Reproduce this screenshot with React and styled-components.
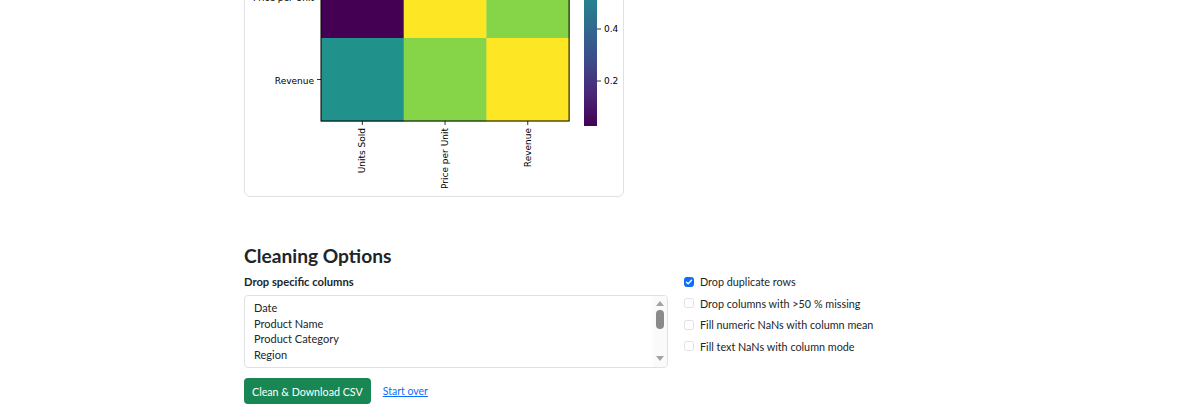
import React from "react";
import styled, { createGlobalStyle } from "styled-components";

const GlobalStyle = createGlobalStyle`
  html, body {
    margin: 0;
    padding: 0;
    background: #fff;
    overflow: hidden;
  }
  body {
    font-family: Lato, "Noto Sans", Arial, sans-serif;
    color: #212529;
  }
`;

const Page = styled.div`
  width: 696px;
  margin: -160px 0 0 244px;
`;

const ChartCard = styled.div`
  width: 370px;
  border: 1px solid #dee2e6;
  border-radius: 6px;
  padding: 4px;
  background: #fff;
`;

const Section = styled.section`
  margin-top: 47px;
`;

const Heading = styled.h4`
  margin: 0 0 6px;
  font-size: 19.2px;
  font-weight: 700;
  line-height: 24px;
  color: #212529;
`;

const Columns = styled.div`
  display: grid;
  grid-template-columns: 424px 1fr;
  column-gap: 16px;
`;

const Label = styled.div`
  font-size: 11.2px;
  font-weight: 700;
  line-height: 15px;
  margin-bottom: 6px;
`;

const ListBox = styled.div`
  display: flex;
  height: 73px;
  border: 1px solid #dee2e6;
  border-radius: 4px;
  box-sizing: border-box;
  overflow: hidden;
`;

const Options = styled.ul`
  flex: 1;
  margin: 0;
  padding: 4px 9px;
  list-style: none;
  font-size: 11px;
  line-height: 15.5px;
`;

const Scrollbar = styled.div`
  width: 14px;
  display: flex;
  flex-direction: column;
  align-items: center;
  justify-content: space-between;
  padding: 5px 0 6px;
  background: #fafafa;
`;

const Arrow = styled.div`
  width: 0;
  height: 0;
  border-left: 4px solid transparent;
  border-right: 4px solid transparent;
  ${(p) =>
    p.$down
      ? "border-top: 5px solid #a3a3a3;"
      : "border-bottom: 5px solid #a3a3a3;"}
`;

const Thumb = styled.div`
  width: 8px;
  height: 19px;
  border-radius: 4px;
  background: #8a8a8a;
  margin-bottom: auto;
  margin-top: 4px;
`;

const Actions = styled.div`
  display: flex;
  align-items: center;
  gap: 12px;
  margin-top: 10px;
`;

const Button = styled.button`
  height: 26px;
  padding: 0 8px;
  border: none;
  border-radius: 4px;
  background: #198754;
  color: #fff;
  font-family: inherit;
  font-size: 10.7px;
  cursor: pointer;
`;

const LinkText = styled.a`
  color: #0d6efd;
  font-size: 10.5px;
  text-decoration: underline;
`;

const Checks = styled.div`
  display: flex;
  flex-direction: column;
  gap: 6.5px;
  padding-top: 0;
`;

const CheckRow = styled.label`
  display: flex;
  align-items: center;
  gap: 6px;
  font-size: 10.8px;
  line-height: 15px;
`;

const Box = styled.span`
  width: 10px;
  height: 10px;
  border-radius: 2.5px;
  box-sizing: border-box;
  display: inline-flex;
  align-items: center;
  justify-content: center;
  border: 1px solid ${(p) => (p.$checked ? "#0d6efd" : "#dee2e6")};
  background: ${(p) => (p.$checked ? "#0d6efd" : "#fff")};
`;

const PURPLE = "#440154";
const TEAL = "#21918c";
const GREEN = "#86d549";
const YELLOW = "#fde725";

const names = ["Units Sold", "Price per Unit", "Revenue"];
const cells = [
  [YELLOW, PURPLE, TEAL],
  [PURPLE, YELLOW, GREEN],
  [TEAL, GREEN, YELLOW],
];

const Heatmap = () => {
  const x0 = 72;
  const y0 = 27;
  const cw = 82.7;
  const ch = 83;
  const cbTop = 28;
  const cbBottom = 281;
  const valY = (v) => 236 - (v - 0.2) * 260;
  return (
    <svg width="370" height="347" viewBox="0 0 370 347" style={{ display: "block" }}>
      <defs>
        <linearGradient id="viridis" x1="0" y1="1" x2="0" y2="0">
          <stop offset="0" stopColor="#440154" />
          <stop offset="0.13" stopColor="#482878" />
          <stop offset="0.25" stopColor="#3e4989" />
          <stop offset="0.38" stopColor="#31688e" />
          <stop offset="0.5" stopColor="#26828e" />
          <stop offset="0.62" stopColor="#1f9e89" />
          <stop offset="0.75" stopColor="#35b779" />
          <stop offset="0.87" stopColor="#6ece58" />
          <stop offset="1" stopColor="#fde725" />
        </linearGradient>
      </defs>
      {cells.map((row, r) =>
        row.map((c, k) => (
          <rect key={`${r}-${k}`} x={x0 + k * cw} y={y0 + r * ch} width={cw + 0.5} height={ch + 0.5} fill={c} />
        ))
      )}
      <rect x={x0} y={y0} width={cw * 3} height={ch * 3} fill="none" stroke="#000" strokeWidth="1" />
      <g fontFamily="DejaVu Sans, sans-serif" fontSize="9" fill="#000">
        {names.map((n, i) => (
          <g key={n}>
            <line x1={x0 - 4} x2={x0} y1={y0 + ch * (i + 0.5)} y2={y0 + ch * (i + 0.5)} stroke="#000" strokeWidth="0.8" />
            <text x={x0 - 7} y={y0 + ch * (i + 0.5) + 4} textAnchor="end">{n}</text>
            <line x1={x0 + cw * (i + 0.5)} x2={x0 + cw * (i + 0.5)} y1={y0 + ch * 3} y2={y0 + ch * 3 + 4} stroke="#000" strokeWidth="0.8" />
            <text
              transform={`translate(${x0 + cw * (i + 0.5) + 3} ${y0 + ch * 3 + 7}) rotate(-90)`}
              textAnchor="end"
            >
              {n}
            </text>
          </g>
        ))}
        <rect x="335" y={cbTop} width="13" height={cbBottom - cbTop} fill="url(#viridis)" />
        {[0.2, 0.4, 0.6, 0.8, 1.0].map((v) => (
          <g key={v}>
            <line x1="348" x2="352" y1={valY(v)} y2={valY(v)} stroke="#000" strokeWidth="0.8" />
            <text x="355" y={valY(v) + 3}>{v.toFixed(1)}</text>
          </g>
        ))}
      </g>
    </svg>
  );
};

const Check = () => (
  <svg width="8" height="8" viewBox="0 0 8 8">
    <path d="M1.5 4.2 L3.2 5.8 L6.5 2.2" fill="none" stroke="#fff" strokeWidth="1.4" strokeLinecap="round" strokeLinejoin="round" />
  </svg>
);

const options = [
  { label: "Drop duplicate rows", checked: true },
  { label: "Drop columns with >50 % missing", checked: false },
  { label: "Fill numeric NaNs with column mean", checked: false },
  { label: "Fill text NaNs with column mode", checked: false },
];

const App = () => (
  <>
    <GlobalStyle />
    <Page>
      <ChartCard>
        <Heatmap />
      </ChartCard>
      <Section>
        <Heading>Cleaning Options</Heading>
        <Columns>
          <div>
            <Label>Drop specific columns</Label>
            <ListBox>
              <Options>
                <li>Date</li>
                <li>Product Name</li>
                <li>Product Category</li>
                <li>Region</li>
              </Options>
              <Scrollbar>
                <Arrow />
                <Thumb />
                <Arrow $down />
              </Scrollbar>
            </ListBox>
            <Actions>
              <Button>Clean &amp; Download CSV</Button>
              <LinkText href="#">Start over</LinkText>
            </Actions>
          </div>
          <Checks>
            {options.map((o) => (
              <CheckRow key={o.label}>
                <Box $checked={o.checked}>{o.checked && <Check />}</Box>
                {o.label}
              </CheckRow>
            ))}
          </Checks>
        </Columns>
      </Section>
    </Page>
  </>
);

export default App;
